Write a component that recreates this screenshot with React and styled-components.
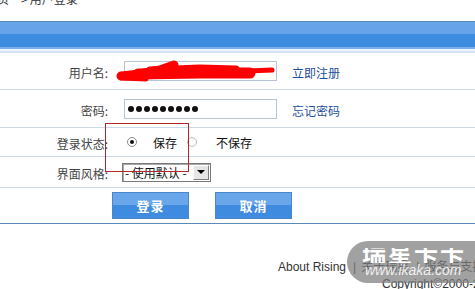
import React from 'react'
import styled, { createGlobalStyle } from 'styled-components'

const GlobalStyle = createGlobalStyle`
  html, body { margin: 0; padding: 0; background: #fff; }
  body {
    font-family: "Noto Sans CJK SC", "Liberation Sans", sans-serif;
    font-size: 12px;
    color: #333;
    overflow: hidden;
  }
`

const Page = styled.div`
  position: relative;
  width: 475px;
  height: 289px;
  overflow: hidden;
`

const Crumb = styled.div`
  height: 21px;
  overflow: hidden;
`

const CrumbText = styled.div`
  display: flex;
  margin: -8px 0 0 -15px;
  line-height: 14px;
  white-space: nowrap;
`

const CrumbSep = styled.span`
  margin: 0 2px 0 12px;
`

const TitleBar = styled.div`
  height: 31px;
  border-top: 1px solid #5b8bbd;
  background: linear-gradient(
    #66a3e8 0 12px,
    #3e8ce0 12px 25px,
    #7aaeea 25px 27px,
    #eef4fb 27px 29px,
    #d2e2f2 29px 31px
  );
`

const Row = styled.div`
  display: flex;
  align-items: center;
  height: ${(p) => p.h}px;
  border-bottom: 1px solid ${(p) => (p.last ? '#5a8ab8' : '#cbd8e5')};
`

const Label = styled.div`
  flex: none;
  width: 108px;
  text-align: right;
  color: #444;
  padding-top: 3px;
`

const Field = styled.div`
  display: flex;
  align-items: center;
  padding-left: ${(p) => p.pad}px;
`

const TextBox = styled.div`
  box-sizing: border-box;
  width: 153px;
  height: 20px;
  border: 1px solid #b5c5d6;
  background: #fff;
  display: flex;
  align-items: center;
  gap: 2px;
  padding-left: 3px;
`

const Dot = styled.span`
  width: 6px;
  height: 6px;
  border-radius: 50%;
  background: #111;
`

const Link = styled.a`
  margin-left: 15px;
  padding-top: 3px;
  color: #1f4f9b;
  text-decoration: none;
`

const Option = styled.label`
  display: flex;
  align-items: center;
  margin-left: ${(p) => p.offset || 0}px;
  gap: ${(p) => p.gap}px;
  color: #111;
`

const Radio = styled.span`
  box-sizing: border-box;
  width: 10px;
  height: 10px;
  border-radius: 50%;
  border: 1px solid ${(p) => (p.checked ? '#8a8a8a' : '#bdbdbd')};
  background: #fff;
  display: flex;
  align-items: center;
  justify-content: center;
  &::after {
    content: '';
    width: 4px;
    height: 4px;
    border-radius: 50%;
    background: ${(p) => (p.checked ? '#111' : 'transparent')};
  }
`

const Select = styled.div`
  box-sizing: border-box;
  width: 89px;
  height: 19px;
  border: 1px solid #7a7a7a;
  box-shadow: inset 1px 1px 0 #a8a8a8;
  display: flex;
  align-items: center;
  justify-content: space-between;
  padding: 0 1px 0 2px;
  color: #111;
  background: #fff;
`

const SelectArrow = styled.span`
  box-sizing: border-box;
  width: 16px;
  height: 15px;
  background: #e6e6e6;
  border: 1px solid;
  border-color: #fff #808080 #808080 #fff;
  display: flex;
  align-items: center;
  justify-content: center;
  &::after {
    content: '';
    border-left: 4px solid transparent;
    border-right: 4px solid transparent;
    border-top: 4px solid #000;
  }
`

const ButtonRow = styled.div`
  display: flex;
  align-items: center;
  gap: 26px;
  padding-left: 112px;
`

const Button = styled.button`
  box-sizing: border-box;
  width: 77px;
  height: 27px;
  border: 1px solid #4a86cc;
  background: linear-gradient(#6aa6ea 0 50%, #3e8be0 50% 100%);
  color: #fff;
  font-family: "Noto Sans CJK SC", sans-serif;
  font-size: 13px;
  font-weight: bold;
  letter-spacing: 1px;
  padding: 0;
`

const Footer = styled.div`
  margin-top: 35px;
  font-family: "Liberation Sans", "Noto Sans CJK SC", sans-serif;
  font-size: 12px;
  line-height: 17px;
  color: #333;
  white-space: nowrap;
`

const FooterLine = styled.div`
  padding-left: ${(p) => p.pad}px;
`

const Bar = styled.span`
  margin: 0 5px 0 7px;
`

const Watermark = styled.div`
  position: absolute;
  left: 347px;
  top: 241px;
  width: 150px;
  height: 42px;
  border-radius: 21px;
  background: rgba(125, 125, 125, 0.72);
  color: #fff;
  padding: 7px 0 0 15px;
  box-sizing: border-box;
`

const Brand = styled.div`
  height: 15px;
  display: flex;
  align-items: flex-end;
  overflow: hidden;
  span {
    font-size: 24px;
    line-height: 22px;
    font-weight: bold;
    letter-spacing: 2px;
    font-family: "Noto Sans CJK SC", sans-serif;
  }
`

const Site = styled.div`
  font-family: "Liberation Sans", sans-serif;
  font-style: italic;
  font-size: 14px;
  line-height: 14px;
  padding-left: 3px;
  opacity: 0.85;
`

const Annotation = styled.div`
  position: absolute;
  left: 105px;
  top: 123px;
  width: 84px;
  height: 49px;
  box-sizing: border-box;
  border: 1px solid #b3262a;
`

const Scribble = styled.svg`
  position: absolute;
  left: 0;
  top: 0;
  pointer-events: none;
`

export default function App() {
  return (
    <Page>
      <GlobalStyle />
      <Crumb>
        <CrumbText>
          <span>首页</span>
          <CrumbSep>&gt;</CrumbSep>
          <span>用户登录</span>
        </CrumbText>
      </Crumb>
      <TitleBar />

      <Row h={36}>
        <Label>用户名:</Label>
        <Field pad={16}>
          <TextBox />
          <Link href="#">立即注册</Link>
        </Field>
      </Row>
      <Row h={37}>
        <Label>密码:</Label>
        <Field pad={16}>
          <TextBox>
            {Array.from({ length: 9 }).map((_, i) => (
              <Dot key={i} />
            ))}
          </TextBox>
          <Link href="#">忘记密码</Link>
        </Field>
      </Row>
      <Row h={28}>
        <Label>登录状态:</Label>
        <Field pad={19}>
          <Option gap={16}>
            <Radio checked />
            保存
          </Option>
          <Option gap={19} offset={10}>
            <Radio />
            不保存
          </Option>
        </Field>
      </Row>
      <Row h={30}>
        <Label>界面风格:</Label>
        <Field pad={14}>
          <Select>
            <span>- 使用默认 -</span>
            <SelectArrow />
          </Select>
        </Field>
      </Row>
      <Row h={35} last>
        <ButtonRow>
          <Button>登录</Button>
          <Button>取消</Button>
        </ButtonRow>
      </Row>

      <Footer>
        <FooterLine pad={278}>
          About Rising<Bar>|</Bar>关于瑞星<Bar>|</Bar>服务与支持<Bar>|</Bar>联系我们
        </FooterLine>
        <FooterLine pad={382}>Copyright©2000-2009 Rising</FooterLine>
      </Footer>

      <Watermark>
        <Brand>
          <span>瑞星卡卡</span>
        </Brand>
        <Site>www.ikaka.com</Site>
      </Watermark>

      <Annotation />

      <Scribble width="475" height="289">
        <g fill="none" stroke="#ff0000" strokeLinecap="round" strokeLinejoin="round">
          <polyline points="121,76 140,74 160,70 174,65" strokeWidth="9" />
          <polyline points="138,74 200,73 250,73" strokeWidth="11" />
          <polyline points="150,70 200,68 236,69" strokeWidth="7" />
          <line x1="248" y1="71" x2="272" y2="70" strokeWidth="5" />
          <line x1="122" y1="78" x2="146" y2="79" strokeWidth="5" />
        </g>
      </Scribble>
    </Page>
  )
}
